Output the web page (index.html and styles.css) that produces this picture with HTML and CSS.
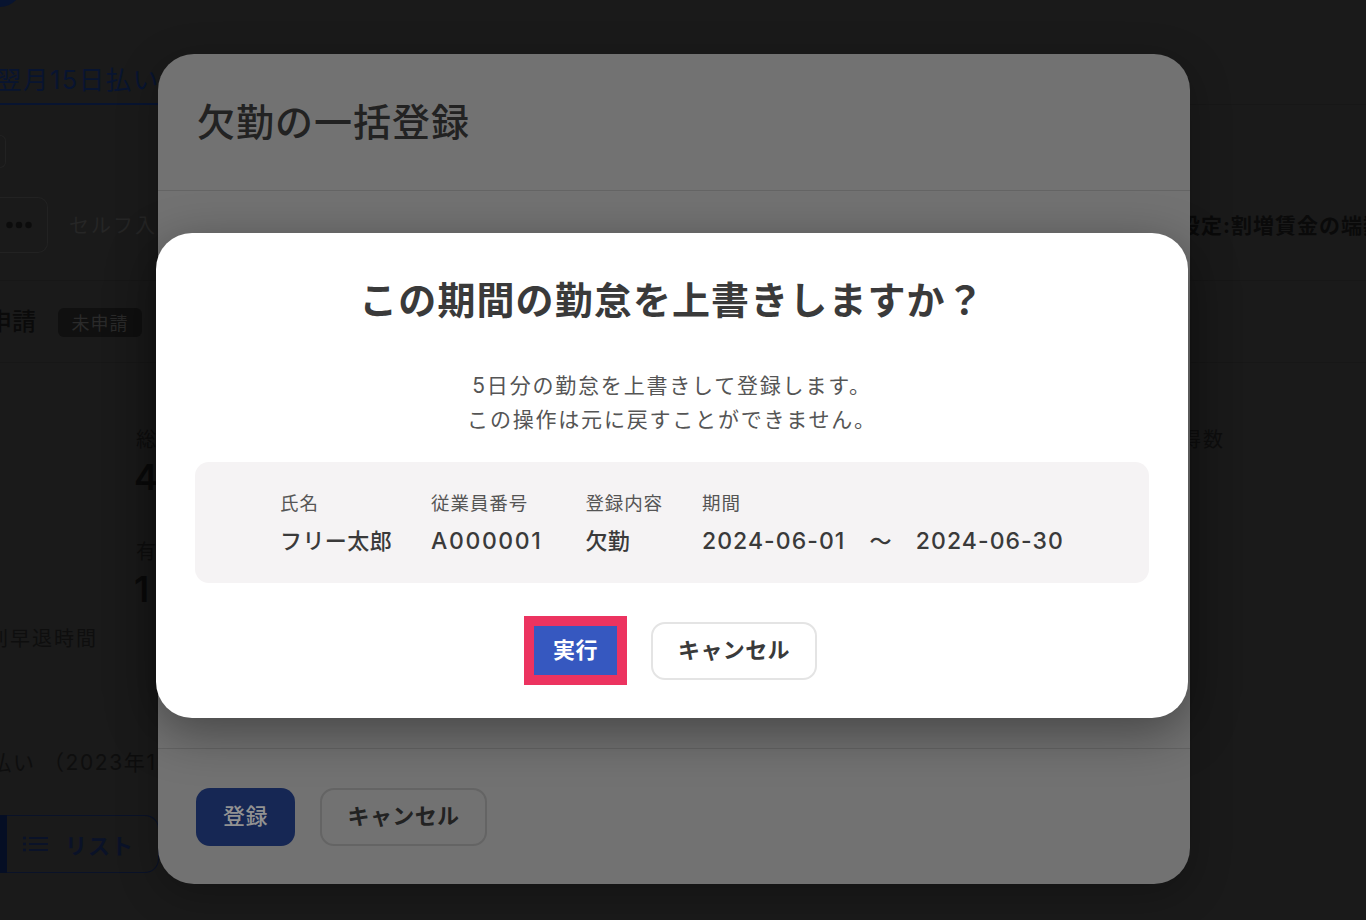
FILE: index.html
```html
<!DOCTYPE html>
<html lang="ja">
<head>
    <meta charset="UTF-8">
    <title>欠勤の一括登録</title>
    <link rel="stylesheet" href="styles.css">
</head>
<body>
    <div class="page">
        <div class="avatar"></div>
        <div class="tabs"><span class="tab">翌月15日払い</span></div>
        <div class="filter-row"><span class="filter-chip"></span></div>
        <div class="action-row">
            <span class="more-btn">
                <svg width="26" height="8" viewBox="0 0 26 8">
                    <circle cx="3.5" cy="4" r="3.2" fill="#0c0c0c"/>
                    <circle cx="13" cy="4" r="3.2" fill="#0c0c0c"/>
                    <circle cx="22.5" cy="4" r="3.2" fill="#0c0c0c"/>
                </svg>
            </span>
            <span class="self-input">セルフ入力</span>
            <span class="setting">設定:割増賃金の端数処理</span>
        </div>
        <div class="status-row">
            <span class="status-title">申請</span>
            <span class="status-chip">未申請</span>
        </div>
        <div class="summary">
            <div class="summary-top">
                <div class="stat">
                    <div class="stat-label">総労働</div>
                    <div class="stat-value">4</div>
                    <div class="stat-label stat-gap">有給</div>
                    <div class="stat-value">1</div>
                </div>
                <div class="stat-right">取得数</div>
            </div>
            <div class="late">遅刻早退時間</div>
            <div class="pay">翌月15日払い （2023年12月分）</div>
            <div class="view-toggle">
                <span class="view-on"></span>
                <span class="view-off">
                    <svg class="list-icon" width="26" height="16" viewBox="0 0 26 16">
                        <path d="M1 2h3M1 8h3M1 14h3" stroke="#0a1228" stroke-width="2.4"/>
                        <path d="M7 2h19M7 8h19M7 14h19" stroke="#0a1228" stroke-width="2"/>
                    </svg>
                    リスト
                </span>
            </div>
        </div>
    </div>

    <div class="modal">
        <div class="modal-head">欠勤の一括登録</div>
        <div class="modal-body"></div>
        <div class="modal-foot">
            <span class="btn-back-primary">登録</span>
            <span class="btn-back-cancel">キャンセル</span>
        </div>
    </div>

    <div class="dialog">
        <h2 class="dialog-title">この期間の勤怠を上書きしますか？</h2>
        <p class="dialog-text">5日分の勤怠を上書きして登録します。<br>この操作は元に戻すことができません。</p>
        <div class="info">
            <div class="info-col">
                <div class="info-label">氏名</div>
                <div class="info-value">フリー太郎</div>
            </div>
            <div class="info-col info-col-id">
                <div class="info-label">従業員番号</div>
                <div class="info-value latin">A000001</div>
            </div>
            <div class="info-col">
                <div class="info-label">登録内容</div>
                <div class="info-value">欠勤</div>
            </div>
            <div class="info-col">
                <div class="info-label">期間</div>
                <div class="info-value period"><span class="latin">2024-06-01</span><span>～</span><span class="latin">2024-06-30</span></div>
            </div>
        </div>
        <div class="dialog-actions">
            <button class="btn-run">実行</button>
            <button class="btn-cancel">キャンセル</button>
        </div>
    </div>
</body>
</html>
```

FILE: styles.css
```css
* {
    box-sizing: border-box;
}
html, body {
    margin: 0;
    height: 920px;
    overflow: hidden;
}
body {
    position: relative;
    background: #1a1a1a;
    font-family: Inter, "Noto Sans CJK JP", sans-serif;
    color: #0a0a0a;
}

/* 背面のページ */
.page {
    height: 920px;
    overflow: hidden;
}
.avatar {
    width: 44px;
    height: 44px;
    margin: -37px 0 0 -22px;
    border-radius: 50%;
    background: #081430;
}
.tabs {
    height: 98px;
    padding-top: 55px;
    margin-left: -4px;
    border-bottom: 1px solid #171717;
}
.tab {
    display: block;
    width: 164px;
    height: 43px;
    font-size: 25.5px;
    line-height: 36px;
    letter-spacing: 1.5px;
    white-space: nowrap;
    color: #081430;
    border-bottom: 2px solid #081430;
}
.filter-row {
    height: 92px;
    padding-top: 30px;
}
.filter-chip {
    display: block;
    width: 6px;
    height: 33px;
    border: 1px solid #222;
    border-left: 0;
    border-radius: 0 8px 8px 0;
}
.action-row {
    display: flex;
    align-items: center;
    height: 84px;
    padding-bottom: 28px;
    border-bottom: 1px solid #171717;
    white-space: nowrap;
}
.more-btn {
    display: flex;
    align-items: center;
    flex: none;
    width: 48px;
    height: 56px;
    padding-left: 6px;
    border: 1px solid #222;
    border-left: 0;
    border-radius: 0 10px 10px 0;
}
.self-input {
    margin-left: 21px;
    font-size: 20px;
    letter-spacing: 2px;
    color: #262626;
}
.setting {
    flex: none;
    width: 187px;
    margin: 0 0 2px auto;
    font-size: 21px;
    font-weight: 700;
    letter-spacing: 1px;
}
.status-row {
    display: flex;
    align-items: center;
    height: 82px;
    padding-bottom: 1px;
    border-bottom: 1px solid #171717;
}
.status-title {
    width: 58px;
    margin: 0 0 4px -12px;
    font-size: 24px;
    font-weight: 500;
    white-space: nowrap;
}
.status-chip {
    margin: 2px 0 0 12px;
    width: 84px;
    height: 29px;
    border-radius: 6px;
    background: #101010;
    color: #2a2a2a;
    font-size: 18px;
    line-height: 31px;
    letter-spacing: 1px;
    text-align: center;
}
.summary-top {
    display: flex;
    justify-content: space-between;
    padding: 62px 0 0 136px;
}
.stat-label {
    font-size: 20px;
    line-height: 30px;
    letter-spacing: 2px;
    color: #0e0e0e;
    white-space: nowrap;
}
.stat-value {
    margin-left: -2px;
    font-size: 36px;
    font-weight: 600;
    line-height: 44px;
}
.stat-gap {
    margin-top: 38px;
}
.stat-right {
    margin-right: 141px;
    font-size: 20px;
    line-height: 30px;
    letter-spacing: 2px;
    color: #0e0e0e;
    white-space: nowrap;
}
.late {
    margin: 13px 0 0 -34px;
    font-size: 20px;
    line-height: 30px;
    letter-spacing: 2px;
    white-space: nowrap;
    color: #0e0e0e;
}
.pay {
    margin: 94px 0 0 -102px;
    font-size: 21px;
    line-height: 30px;
    letter-spacing: 1.6px;
    white-space: nowrap;
    color: #0e0e0e;
}
.view-toggle {
    display: flex;
    height: 58px;
    margin-top: 37px;
}
.view-on {
    width: 7px;
    background: #050e24;
}
.view-off {
    display: flex;
    align-items: center;
    gap: 17px;
    width: 152px;
    padding-left: 15px;
    border: 1px solid #0a1228;
    border-left: 0;
    border-radius: 0 14px 14px 0;
    font-size: 22px;
    font-weight: 700;
    letter-spacing: 1px;
    color: #0a1228;
}

/* 背面のモーダル */
.modal {
    position: absolute;
    left: 158px;
    top: 54px;
    width: 1032px;
    height: 830px;
    display: flex;
    flex-direction: column;
    background: #727272;
    border-radius: 36px;
    box-shadow: 0 10px 40px rgba(0, 0, 0, 0.25);
}
.modal-head {
    height: 137px;
    padding: 40px 0 0 39px;
    font-size: 38px;
    font-weight: 500;
    line-height: 56px;
    letter-spacing: 1px;
    color: #222;
    border-bottom: 1px solid #646464;
}
.modal-body {
    flex: 1;
    border-bottom: 1px solid #646464;
}
.modal-foot {
    display: flex;
    gap: 25px;
    height: 135px;
    padding: 39px 0 0 38px;
}
.btn-back-primary,
.btn-back-cancel {
    height: 58px;
    border-radius: 14px;
    font-size: 22px;
    font-weight: 500;
    line-height: 56px;
    letter-spacing: 0.4px;
    text-align: center;
}
.btn-back-primary {
    width: 99px;
    background: #162754;
    color: #929292;
}
.btn-back-cancel {
    width: 167px;
    border: 2px solid #646464;
    line-height: 52px;
    color: #222;
    font-weight: 700;
}

/* 確認ダイアログ */
.dialog {
    position: absolute;
    left: 156px;
    top: 233px;
    width: 1032px;
    height: 485px;
    padding: 0 39px;
    background: #fff;
    border-radius: 36px;
    box-shadow: 0 14px 50px rgba(0, 0, 0, 0.4);
    text-align: center;
    color: #3a3a3a;
}
.dialog-title {
    margin: 0;
    padding-top: 41px;
    font-size: 38px;
    font-weight: 700;
    line-height: 52px;
    letter-spacing: 1.1px;
}
.dialog-text {
    margin: 43px 0 0;
    font-size: 21px;
    font-weight: 400;
    line-height: 34px;
    letter-spacing: 1.8px;
    color: #555;
}
.info {
    display: flex;
    justify-content: center;
    gap: 39px;
    height: 121px;
    margin-top: 25px;
    padding-top: 26px;
    background: #f5f3f4;
    border-radius: 14px;
    text-align: left;
}
.info-col-id {
    margin-right: 4px;
}
.info-col-id .latin {
    letter-spacing: 1.6px;
}
.info-label {
    font-size: 18.5px;
    line-height: 30px;
    letter-spacing: 0.9px;
    color: #555;
}
.info-value {
    margin-top: 7px;
    font-size: 22px;
    font-weight: 500;
    line-height: 32px;
    letter-spacing: 0.4px;
    white-space: nowrap;
}
.latin {
    font-size: 23px;
    letter-spacing: 1.05px;
}
.period {
    display: flex;
    gap: 24px;
}
.dialog-actions {
    display: flex;
    justify-content: center;
    align-items: center;
    gap: 24px;
    margin-top: 33px;
    padding-right: 3px;
}
.btn-run,
.btn-cancel {
    font-family: inherit;
    font-size: 22px;
    font-weight: 700;
    letter-spacing: 0.4px;
    padding: 0 0 6px;
}
.btn-run {
    width: 103px;
    height: 69px;
    background: #3658c0;
    border: 10px solid #ec3360;
    color: #fff;
}
.btn-cancel {
    width: 166px;
    height: 58px;
    background: #fff;
    border: 2px solid #e4e4e4;
    border-radius: 14px;
    color: #3a3a3a;
}
```
